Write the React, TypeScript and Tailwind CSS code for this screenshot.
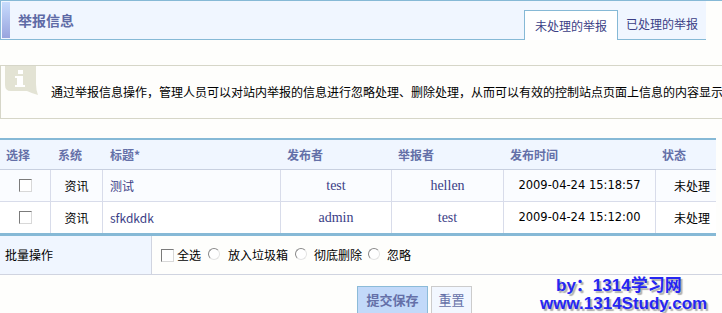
import React from "react";

const cols = "grid grid-cols-[51px_52px_178px_111px_112px_152px_60px]";

const rows = [
  { type: "资讯", title: "测试", author: "test", reporter: "hellen", time: "2009-04-24 15:18:57", status: "未处理" },
  { type: "资讯", title: "sfkdkdk", author: "admin", reporter: "test", time: "2009-04-24 15:12:00", status: "未处理" },
];

const Box = () => (
  <span className="inline-block h-[13px] w-[13px] border border-[#7b7b7b] border-b-[#d8d8d8] border-r-[#d8d8d8] bg-white" />
);

const Radio = () => (
  <span className="inline-block h-[12px] w-[12px] rounded-full border border-[#8a8a8a] border-b-[#e4e4e4] border-r-[#e4e4e4] bg-white" />
);

const InfoIcon = () => (
  <svg width="34" height="31" viewBox="0 0 34 31" className="shrink-0">
    <path d="M0 0 H31 V18 Q31 24 33 29 Q26 27 22 25 H6 Q0 25 0 19 Z" fill="#e3e3d4" />
    <rect x="13" y="4" width="5" height="4" fill="#fff" />
    <rect x="12" y="10" width="6" height="11" fill="#fff" />
    <rect x="10" y="10" width="3" height="2" fill="#fff" />
    <rect x="10" y="19" width="10" height="2" fill="#fff" />
  </svg>
);

const App = () => {
  return (
    <div className="relative h-[313px] w-[722px] overflow-hidden bg-[#fefefc] font-['Noto_Sans_CJK_SC',sans-serif] text-[12px] text-black">
      {/* header */}
      <div className="border-t border-[#86b9d6]">
        <div className="flex h-[39px] w-[706px] border-b border-l border-[#86b9d6] bg-[#f0f6ff]">
          <div className="my-[1px] ml-[1px] w-[8px] bg-gradient-to-b from-[#c8dcfd] to-[#98a4de]" />
          <h2 className="flex items-center pl-[8px] text-[14px] font-bold text-[#5e6aa6]">举报信息</h2>
          <div className="ml-auto flex items-end">
            <div className="-mb-[1px] flex h-[30px] w-[94px] items-center justify-center border border-b-0 border-[#86b9d6] bg-white text-[#3b3e86]">
              未处理的举报
            </div>
            <div className="flex h-[30px] w-[88px] items-center justify-center text-[#3b3e86]">已处理的举报</div>
          </div>
        </div>
      </div>

      {/* info */}
      <div className="mt-[25px] flex h-[54px] w-[760px] items-start border border-r-0 border-[#d6d6c8]">
        <div className="ml-[4px]">
          <InfoIcon />
        </div>
        <p className="ml-[12px] self-center whitespace-nowrap">
          通过举报信息操作，管理人员可以对站内举报的信息进行忽略处理、删除处理，从而可以有效的控制站点页面上信息的内容显示
        </p>
      </div>

      {/* table */}
      <div className="mt-[19px] w-[716px] border-t-2 border-[#86b9d6]">
        <div className={`${cols} h-[30px] items-center border-b border-[#c8d0e0] bg-[#f0f6ff] font-bold text-[#6470a8]`}>
          <div className="pl-[6px]">选择</div>
          <div className="pl-[7px]">系统</div>
          <div className="pl-[7px]">标题*</div>
          <div className="pl-[6px]">发布者</div>
          <div className="pl-[6px]">举报者</div>
          <div className="pl-[6px]">发布时间</div>
          <div className="pl-[6px]">状态</div>
        </div>
        {rows.map((r, i) => (
          <div
            key={i}
            className={`${cols} ${i === 0 ? "h-[32px] border-b border-[#d8dcea] bg-[#fafcff]" : "h-[31px] bg-white"}`}
          >
            <div className="flex items-center justify-center border-r border-[#d8dcea]">
              <Box />
            </div>
            <div className="flex items-center justify-center border-r border-[#d8dcea]">{r.type}</div>
            <div className="flex items-center border-r border-[#d8dcea] pl-[7px] text-[#3b3e86]">{r.title}</div>
            <div className="flex items-center justify-center border-r border-[#d8dcea] font-['Liberation_Serif',serif] text-[14px] text-[#3b3e86]">
              {r.author}
            </div>
            <div className="flex items-center justify-center border-r border-[#d8dcea] font-['Liberation_Serif',serif] text-[14px] text-[#3b3e86]">
              {r.reporter}
            </div>
            <div className="flex items-center justify-center border-r border-[#d8dcea] font-['DejaVu_Sans',sans-serif] text-[11.5px]">
              {r.time}
            </div>
            <div className="flex items-center justify-end pr-[6px]">{r.status}</div>
          </div>
        ))}
        <div className="h-[3px] bg-[#86b9d6]" />
      </div>

      {/* batch */}
      <div className="flex h-[39px] w-[722px] border-b border-[#d0d4e0]">
        <div className="flex w-[152px] items-center border-r border-[#d0d4e0] bg-[#f0f6ff] pl-[5px]">批量操作</div>
        <div className="flex items-center pl-[9px]">
          <Box />
          <span className="ml-[3px]">全选</span>
          <span className="ml-[7px]"><Radio /></span>
          <span className="ml-[8px]">放入垃圾箱</span>
          <span className="ml-[7px]"><Radio /></span>
          <span className="ml-[7px]">彻底删除</span>
          <span className="ml-[6px]"><Radio /></span>
          <span className="ml-[7px]">忽略</span>
        </div>
      </div>

      {/* buttons */}
      <div className="mt-[11px] flex gap-[3px] pl-[357px]">
        <button className="h-[30px] w-[71px] border border-b-[3px] border-[#8cbbd8] bg-[#c2d9f9] text-[13px] font-bold text-[#6470a8]">
          提交保存
        </button>
        <button className="h-[30px] w-[41px] border border-b-[3px] border-[#cccccc] bg-[#f2f7ff] text-[13px] text-[#6470a8]">
          重置
        </button>
      </div>

      {/* watermark */}
      <div className="absolute left-[540px] top-[277px] flex flex-col gap-0 font-['Liberation_Sans',sans-serif] text-[17px] font-bold leading-[18px] text-[#2626f2] [text-shadow:2px_2px_1px_#b0b0b0]">
        <div className="pl-[16px] font-['Liberation_Sans','Noto_Sans_CJK_SC',sans-serif]">by：1314学习网</div>
        <div>www.1314Study.com</div>
      </div>
    </div>
  );
};

export default App;
